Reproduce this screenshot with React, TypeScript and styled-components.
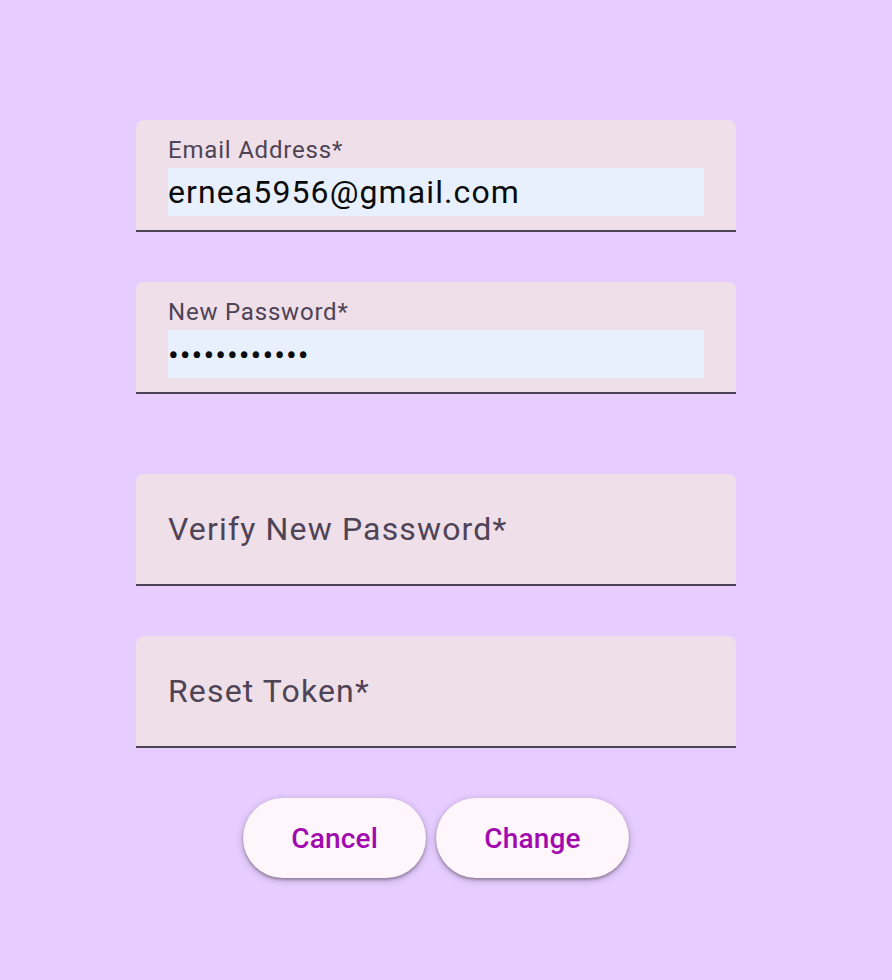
import React from "react";
import styled, { createGlobalStyle } from "styled-components";

const Global = createGlobalStyle`
  html, body { margin: 0; padding: 0; background: #e6ccff; }
  body { font-family: Roboto, "Noto Sans", sans-serif; }
`;

const Page = styled.div`
  width: 872px;
  min-height: 980px;
  display: flex;
  flex-direction: column;
  align-items: center;
  padding-top: 120px;
  box-sizing: border-box;
`;

const Form = styled.div`
  width: 600px;
  display: flex;
  flex-direction: column;
`;

const Field = styled.div<{ $gap: number }>`
  height: 112px;
  box-sizing: border-box;
  background: #eedfe8;
  border-radius: 8px 8px 0 0;
  border-bottom: 2px solid #4b4452;
  padding: 0 32px;
  margin-bottom: ${(p) => p.$gap}px;
  display: flex;
  flex-direction: column;
`;

const FloatLabel = styled.div`
  font-size: 24px;
  letter-spacing: 0.8px;
  color: #4f4356;
  line-height: 24px;
  margin-top: 18px;
  height: 24px;
`;

const Filled = styled.div`
  margin-top: 6px;
  height: 48px;
  background: #e8f0fe;
  display: flex;
  align-items: center;
  font-size: 32px;
  letter-spacing: 1.1px;
  color: #0a0a0a;
`;

const Dots = styled.span`
  font-family: Roboto, sans-serif;
  font-size: 32px;
  letter-spacing: 1px;
  padding-top: 2px;
`;

const Placeholder = styled.div`
  font-size: 32px;
  letter-spacing: 1.15px;
  color: #4f4356;
  height: 110px;
  display: flex;
  align-items: center;
`;

const Buttons = styled.div`
  display: flex;
  gap: 10px;
  justify-content: center;
  margin-top: 50px;
`;

const Button = styled.button`
  height: 80px;
  padding: 0 48px;
  border: none;
  border-radius: 40px;
  background: #fff6fb;
  color: #a10aaf;
  font-family: Roboto, sans-serif;
  font-weight: 500;
  font-size: 28px;
  letter-spacing: 0.2px;
  box-shadow: 0 2px 3px rgba(0, 0, 0, 0.3), 0 2px 6px 2px rgba(0, 0, 0, 0.12);
  cursor: pointer;
`;

export default function App() {
  return (
    <>
      <Global />
      <Page>
        <Form>
          <Field $gap={50}>
            <FloatLabel>Email Address*</FloatLabel>
            <Filled>ernea5956@gmail.com</Filled>
          </Field>
          <Field $gap={80}>
            <FloatLabel>New Password*</FloatLabel>
            <Filled>
              <Dots>••••••••••••</Dots>
            </Filled>
          </Field>
          <Field $gap={50}>
            <Placeholder>Verify New Password*</Placeholder>
          </Field>
          <Field $gap={0}>
            <Placeholder>Reset Token*</Placeholder>
          </Field>
        </Form>
        <Buttons>
          <Button>Cancel</Button>
          <Button>Change</Button>
        </Buttons>
      </Page>
    </>
  );
}
